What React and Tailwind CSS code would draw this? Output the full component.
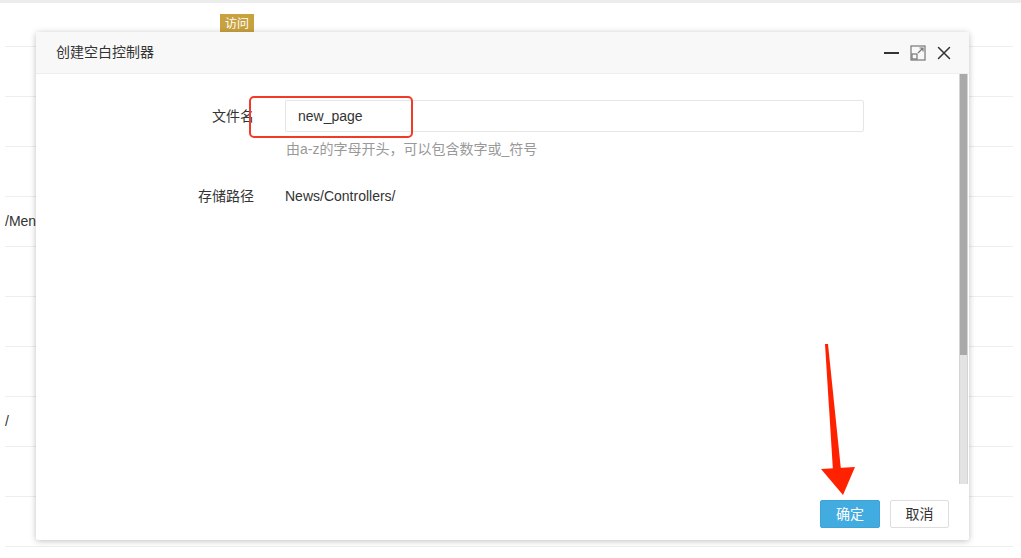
import React from 'react';

const font = { fontFamily: '"Liberation Sans", "Noto Sans CJK SC", sans-serif' };

const rows = ['', '', '', '/Menu', '', '', '', '/', '', '', ''];

const App = () => {
  return (
    <div className="relative w-[1021px] h-[558px] overflow-hidden bg-white text-[#333]" style={font}>
      {/* background page */}
      <div className="h-[3px] bg-[#ececec]" />
      <div className="px-[5px] pr-[8px]">
        <div className="h-[44px] border-b border-[#eeeeee] flex items-center">
          <span className="ml-[215px] bg-[#c9a240] text-white text-[12px] leading-[21px] px-[5px]">访问</span>
        </div>
        {rows.map((text, i) => (
          <div key={i} className="h-[50px] border-b border-[#eeeeee] flex items-center text-[14px]">
            {text}
          </div>
        ))}
      </div>

      {/* modal */}
      <div className="absolute left-[36px] top-[32px] w-[933px] h-[508px] bg-white rounded-[2px] shadow-[0_1px_6px_rgba(0,0,0,0.25)] flex flex-col">
        <div className="h-[42px] shrink-0 bg-[#f8f8f8] border-b border-[#eeeeee] flex items-center justify-between pl-[20px] pr-[17px] rounded-t-[2px]">
          <span className="text-[14px] text-[#333]">创建空白控制器</span>
          <div className="flex items-center gap-[10px]">
            <svg width="16" height="16" viewBox="0 0 16 16">
              <rect x="0" y="7" width="15" height="2" fill="#333" />
            </svg>
            <svg width="16" height="16" viewBox="0 0 16 16" fill="none" stroke="#777" strokeWidth="1.2">
              <rect x="1" y="1" width="14" height="14" />
              <rect x="2" y="9" width="5" height="5" />
              <path d="M8 8 L13 3 M9.5 3 H13 V6.5" />
            </svg>
            <svg width="16" height="16" viewBox="0 0 16 16" stroke="#333" strokeWidth="1.5" strokeLinecap="round">
              <path d="M2.5 2.5 L13.5 13.5 M13.5 2.5 L2.5 13.5" />
            </svg>
          </div>
        </div>

        <div className="flex flex-1 min-h-0">
          <div className="flex-1 pt-[26px]">
            <div className="flex items-center">
              <label className="w-[219px] text-right text-[14px] text-[#333] pr-[1px]">文件名</label>
              <div className="ml-[30px] w-[579px] h-[32px] border border-[#e6e6e6] rounded-[2px] flex items-center pl-[12px] text-[14px] text-[#333]">
                new_page
              </div>
            </div>
            <div className="ml-[250px] mt-[7px] text-[14px] leading-[20px] text-[#999]">由a-z的字母开头，可以包含数字或_符号</div>
            <div className="flex items-center mt-[27px] h-[20px]">
              <label className="w-[219px] text-right text-[14px] text-[#333] pr-[1px]">存储路径</label>
              <span className="ml-[30px] text-[14px] text-[#333]">News/Controllers/</span>
            </div>
          </div>
          <div className="w-[9px] mr-[1px] bg-[#e3e3e3] border-x border-[#d4d4d4] flex flex-col">
            <div className="h-[281px] bg-[#a9a9a9]" />
          </div>
        </div>

        <div className="h-[56px] shrink-0 flex items-start justify-end gap-[10px] pt-[16px] pr-[20px]">
          <button className="w-[60px] h-[28px] bg-[#42abe0] border border-[#3ea4d8] rounded-[2px] text-white text-[14px]">确定</button>
          <button className="w-[59px] h-[28px] bg-white border border-[#dedede] rounded-[2px] text-[#333] text-[14px]">取消</button>
        </div>
      </div>

      {/* annotations */}
      <div className="absolute left-[249px] top-[96px] w-[164px] h-[42px] border-2 border-[#f23a2a] rounded-[5px]" />
      <svg className="absolute left-0 top-0" width="1021" height="558">
        <path d="M825 344 L828 344 L841 470 L833 471 Z" fill="#ff2200" />
        <path d="M821 469 L855 467 L843 495 Z" fill="#ff2200" />
      </svg>
    </div>
  );
};

export default App;
